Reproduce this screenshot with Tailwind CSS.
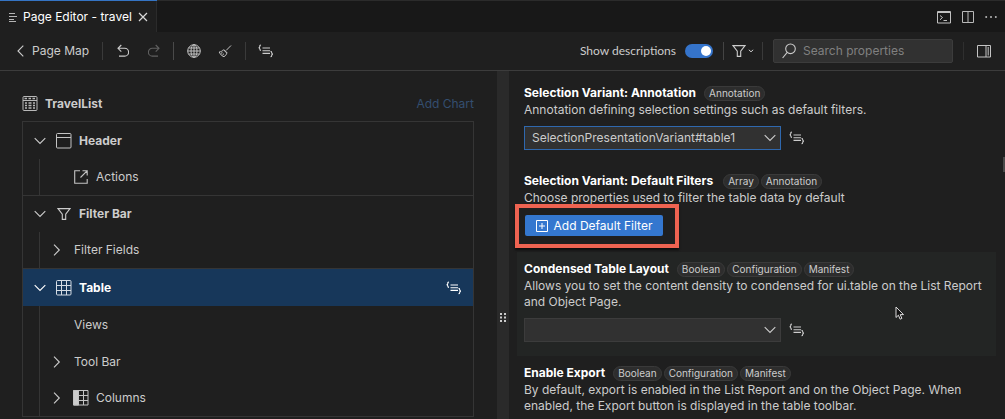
<!DOCTYPE html>
<html lang="en">
<head>
<meta charset="utf-8">
<title>Page Editor - travel</title>
<script src="https://cdn.jsdelivr.net/npm/@tailwindcss/browser@4"></script>
</head>
<body class="flex h-screen flex-col overflow-hidden bg-[#1f1f1f] font-['Inter','Liberation_Sans',sans-serif] text-xs text-[#cccccc]">
<svg class="hidden">
  <symbol id="code" viewBox="0 0 16 14" fill="none" stroke="currentColor" stroke-width="1.1">
    <path d="M3 1C1.800 1 1.800 1.600 1.800 2.400S1.600 3.600.6 3.700C1.600 3.800 1.800 4.300 1.800 5.100S1.800 6.400 3 6.400M4.500 4h7.500M4.500 6.700h7.500M4.500 9.400h7.500M12.500 7.400c1.200 0 1.200.6 1.200 1.400s.2 1.200 1.200 1.300c-1 .1-1.200.6-1.200 1.400s0 1.300-1.200 1.300"/>
  </symbol>
  <symbol id="down" viewBox="0 0 12 8" fill="none" stroke="currentColor" stroke-width="1.1"><path d="M.7 1.200 6 6.500l5.300-5.300"/></symbol>
  <symbol id="right" viewBox="0 0 8 12" fill="none" stroke="currentColor" stroke-width="1.1"><path d="M1 .7 6.300 6 1 11.300"/></symbol>
  <symbol id="funnel" viewBox="0 0 14 14" fill="none" stroke="currentColor" stroke-width="1.1"><path d="M1 1.600h12L8.700 7.200v5.200H5.300V7.200z"/></symbol>
</svg>

<header class="flex h-8 shrink-0 items-stretch border-t border-[#2b2b2b] bg-[#181818]">
  <div class="flex w-[157px] items-center border-r border-[#2b2b2b] bg-[#1f1f1f] pl-[9px] shadow-[0_-1px_0_#3574c4]">
    <svg class="mr-1.5 h-3 w-2 shrink-0" viewBox="0 0 8 12" stroke="#b5b5b5" fill="none"><path d="M0 2.500h6M0 5.500h8M0 8.500h5M0 10.500h7"/></svg>
    <span class="whitespace-nowrap text-white">Page Editor - travel</span>
    <button aria-label="Close tab" class="ml-1.5 shrink-0"><svg class="h-2.5 w-2.5" viewBox="0 0 10 10" stroke="#d8d8d8" stroke-width="1.2"><path d="m1 1 8 8M9 1 1 9"/></svg></button>
  </div>
  <div class="ml-auto flex items-center gap-[11px] pr-2">
    <button aria-label="Open terminal"><svg class="h-3.5 w-3.5" viewBox="0 0 14 14" fill="none" stroke="#c0c0c0"><path d="M.5 1.500h13v11.500H.5zM.5 2.500h13M3 5.500l2.500 2L3 9.800M6.500 10.500H10"/></svg></button>
    <button aria-label="Split editor"><svg class="h-3.5 w-3" viewBox="0 0 12 14" fill="none" stroke="#b8b8b8"><path d="M.5 1.500h11v11H.5zM6 1.500v11"/></svg></button>
    <button aria-label="More actions"><svg class="h-3.5 w-3" viewBox="0 0 12 14" fill="#b8b8b8"><circle cx="1.200" cy="7" r="1"/><circle cx="6" cy="7" r="1"/><circle cx="10.800" cy="7" r="1"/></svg></button>
  </div>
</header>

<div class="flex h-[39px] shrink-0 items-center border-b border-[#3c3c3c] pr-3.5 pl-[17px]">
  <button class="flex items-center gap-2">
    <svg class="h-3 w-[7px]" viewBox="0 0 7 12" fill="none" stroke="currentColor" stroke-width="1.1"><path d="M6.300.7 1 6l5.300 5.300"/></svg>
    <span>Page Map</span>
  </button>
  <span class="ml-[13px] h-[18px] w-px bg-[#3a3a3a]"></span>
  <button aria-label="Undo" class="ml-3.5"><svg class="h-3.5 w-3" viewBox="0 0 12 14" fill="none" stroke="#cccccc" stroke-width="1.100"><path d="M4.300 1 1 4.300l3.300 3.300M1 4.300h6.700a3.900 3.900 0 0 1 0 7.800H2"/></svg></button>
  <button aria-label="Redo" class="ml-[19px]" disabled><svg class="h-3.5 w-3" viewBox="0 0 12 14" fill="none" stroke="#606060" stroke-width="1.100"><path d="M7.700 1 11 4.300 7.700 7.600M11 4.300H4.300a3.900 3.900 0 0 0 0 7.800H10"/></svg></button>
  <span class="ml-[13px] h-[18px] w-px bg-[#4a4a4a]"></span>
  <button aria-label="Language" class="ml-[13px]"><svg class="h-3.5 w-3.5" viewBox="0 0 14 14" fill="none" stroke="#c4c4c4"><circle cx="7" cy="7" r="6.300"/><ellipse cx="7" cy="7" rx="3" ry="6.300"/><path d="M7 .7v12.600M.7 7h12.600M1.600 4h10.800M1.600 10h10.800"/></svg></button>
  <button aria-label="Clean up" class="ml-[17px]"><svg class="h-3.5 w-3.5" viewBox="0 0 14 14" fill="none" stroke="#c4c4c4"><path d="M13 1.500 8.200 6.400M5.800 5.500l3.400 3.400M5.500 5.800C4.500 7.200 3 7.600 1.200 8c1 2.300 2.500 3.900 4.800 4.700 1.400-1 2.400-2 2.800-3.600zM2.800 9.300l1.700-.6M4.300 11.200l1.700-1.500"/></svg></button>
  <span class="ml-[13px] h-[18px] w-px bg-[#3a3a3a]"></span>
  <button aria-label="Show source" class="ml-3"><svg class="h-3.5 w-4"><use href="#code"/></svg></button>

  <label for="desc" class="ml-auto font-['Lato','Noto_Sans',sans-serif]">Show descriptions</label>
  <input id="desc" type="checkbox" role="switch" checked class="ml-[9px] h-3.5 w-7 appearance-none rounded-full bg-[#3574cb] before:mt-[2px] before:ml-4 before:block before:h-2.5 before:w-2.5 before:rounded-full before:bg-white">
  <span class="ml-2.5 h-[18px] w-px bg-[#444444]"></span>
  <button aria-label="Filter properties" class="ml-2 flex items-center gap-0.5">
    <svg class="h-3.5 w-3.5"><use href="#funnel"/></svg>
    <svg class="h-1 w-1.5" viewBox="0 0 6 4" fill="none" stroke="currentColor"><path d="m.8.8 2.200 2 2.200-2"/></svg>
  </button>
  <span class="ml-2 h-[18px] w-px bg-[#3a3a3a]"></span>
  <div class="ml-2.5 flex h-6 w-[180px] items-center gap-[7px] rounded-xs border border-[#3c3c3c] bg-[#313131] pl-2">
    <svg class="h-4 w-3.5 shrink-0" viewBox="0 0 14 16" fill="none" stroke="currentColor" stroke-width="1.100"><circle cx="8.500" cy="5.800" r="4.800"/><path d="M5.200 9.400.6 15"/></svg>
    <input type="text" aria-label="Search properties" placeholder="Search properties" class="w-full min-w-0 bg-transparent outline-none placeholder:text-[#808080]">
  </div>
  <span class="ml-2.5 h-[18px] w-px bg-[#2f2f2f]"></span>
  <button aria-label="Toggle side panel" class="ml-[13px]"><svg class="h-3.5 w-3.5" viewBox="0 0 14 14" fill="none" stroke="#c4c4c4"><path d="M.5 1.500h13v11.500H.5zM9 1.500V13M11.200 3v8.500"/></svg></button>
</div>

<main class="flex min-h-0 flex-1">
  <section class="w-[497px] shrink-0 pt-[22px] pr-[23px] pl-[22px]">
    <div class="flex h-[22px] items-center">
      <svg class="mr-[7px] h-4 w-4" viewBox="0 0 16 16" fill="none" stroke="#b8b8b8"><rect x="1" y=".5" width="14" height="14" rx="1"/><path d="M1 4.500h14" /><path d="M2.500 2.500h2.500M6.500 2.500H9M10.500 2.500H13M3 7h2M6.500 7h3M11 7h2M3 9.500h2M6.500 9.500h3M11 9.500h2M3 12h2M6.500 12h3M11 12h2" stroke-width="1.400"/></svg>
      <h1 class="font-bold">TravelList</h1>
      <button class="ml-auto text-[#344e6f]" disabled>Add Chart</button>
    </div>
    <div class="mt-1.5 border border-[#353535]">
      <div>
        <div class="flex h-[37px] items-center pl-[11px]">
          <button aria-label="Collapse Header"><svg class="h-2 w-3"><use href="#down"/></svg></button>
          <svg class="mr-[7px] ml-[10px] h-4 w-4" viewBox="0 0 16 16" fill="none" stroke="#c4c4c4"><rect x=".5" y=".5" width="14.500" height="14.500" rx="1"/><path d="M.5 4.500H15"/></svg>
          <span class="font-bold">Header</span>
        </div>
        <div class="ml-4 border-l border-[#353535]">
          <div class="flex h-9 items-center pl-[34px]">
            <svg class="mr-2 h-3.5 w-3.5" viewBox="0 0 14 14" fill="none" stroke="#c4c4c4" stroke-width="1.100"><path d="M6 .8H.7v12.400h12.500V9M6.500 7.500l6.300-6.300M8.500.8h4.700v4.700"/></svg>
            <span>Actions</span>
          </div>
        </div>
      </div>
      <div class="border-t border-[#353535]">
        <div class="flex h-9 items-center pl-[11px]">
          <button aria-label="Collapse Filter Bar"><svg class="h-2 w-3"><use href="#down"/></svg></button>
          <svg class="mr-2 ml-[11px] h-3.5 w-3.5"><use href="#funnel"/></svg>
          <span class="font-bold">Filter Bar</span>
        </div>
        <div class="ml-4 border-l border-[#353535]">
          <div class="flex h-9 items-center pl-[13px]">
            <button aria-label="Expand Filter Fields" class="mr-[13px]"><svg class="h-3 w-2"><use href="#right"/></svg></button>
            <span>Filter Fields</span>
          </div>
        </div>
      </div>
      <div class="border-t border-[#353535]">
        <div class="flex h-[37px] items-center bg-[#17375a] pr-[11px] pl-[11px] text-white">
          <button aria-label="Collapse Table"><svg class="h-2 w-3"><use href="#down"/></svg></button>
          <svg class="mr-[7px] ml-[10px] h-4 w-4" viewBox="0 0 16 16" fill="none" stroke="#d4dce4"><rect x=".5" y=".5" width="14.500" height="14.500" rx="1"/><path d="M.5 5.500H15M.5 10.500H15M5.500.5V15M10.500.5V15"/></svg>
          <span class="font-bold">Table</span>
          <button aria-label="Show Table source" class="ml-auto"><svg class="h-3.5 w-4"><use href="#code"/></svg></button>
        </div>
        <div class="ml-4 border-l border-[#353535]">
          <div class="flex h-[37px] items-center pl-[34px]">Views</div>
          <div class="flex h-[37px] items-center pl-[13px]">
            <button aria-label="Expand Tool Bar" class="mr-[13px]"><svg class="h-3 w-2"><use href="#right"/></svg></button>
            <span>Tool Bar</span>
          </div>
          <div class="flex h-9 items-center pl-[13px]">
            <button aria-label="Expand Columns" class="mr-[12px]"><svg class="h-3 w-2"><use href="#right"/></svg></button>
            <svg class="mr-[7px] h-4 w-4" viewBox="0 0 16 16" fill="none" stroke="#c4c4c4"><path fill="#cccccc" d="M.5.5h5V15h-5z"/><path d="M.5.500H15V15H.5M5 5.500h10M5 10.500h10M10.500.500V15"/></svg>
            <span>Columns</span>
          </div>
        </div>
      </div>
    </div>
  </section>

  <div class="flex w-3 shrink-0 items-center justify-center bg-[#2a2a2a] pt-36" role="separator" aria-orientation="vertical">
    <svg class="h-[9px] w-1.5" viewBox="0 0 6 9" fill="#cccccc"><path d="M0 0h2v2H0zM4 0h2v2H4zM0 3.500h2v2H0zM4 3.500h2v2H4zM0 7h2v2H0zM4 7h2v2H4z"/></svg>
  </div>

  <section class="relative min-w-0 flex-1 overflow-hidden pt-[5px] pr-[9px] pl-2 leading-4">
    <div class="px-[7px] pt-2 pb-3.5">
      <div class="flex h-[18px] items-center gap-0.5">
        <h2 class="mr-1.5 font-bold text-white">Selection Variant: Annotation</h2>
        <span class="rounded-full border border-[#3a3a3a] bg-[#2d2d2d] px-1 text-[10px] leading-[13px]">Annotation</span>
      </div>
      <p>Annotation defining selection settings such as default filters.</p>
      <div class="mt-2 flex items-center">
        <div class="relative w-[257px]">
          <select aria-label="Selection Variant: Annotation" class="block h-6 w-full appearance-none border border-[#2f68ae] bg-[#313131] pl-[7px] outline-none"><option>SelectionPresentationVariant#table1</option></select>
          <svg class="pointer-events-none absolute top-2 right-[5px] h-2 w-3"><use href="#down"/></svg>
        </div>
        <button aria-label="Show annotation source" class="ml-2"><svg class="h-3.5 w-4"><use href="#code"/></svg></button>
      </div>
    </div>

    <div class="px-[7px] pt-2 pb-4">
      <div class="flex h-[18px] items-center gap-0.5">
        <h2 class="mr-2 font-bold text-white">Selection Variant: Default Filters</h2>
        <span class="rounded-full border border-[#3a3a3a] bg-[#2d2d2d] px-1 text-[10px] leading-[13px]">Array</span>
        <span class="rounded-full border border-[#3a3a3a] bg-[#2d2d2d] px-1 text-[10px] leading-[13px]">Annotation</span>
      </div>
      <p>Choose properties used to filter the table data by default</p>
      <div class="relative mt-[9px] ml-px w-fit">
        <button class="flex h-[21px] w-[138px] items-center justify-center gap-1.5 rounded-xs bg-[#3477cf] text-white">
          <svg class="h-3 w-3 shrink-0" viewBox="0 0 12 12" fill="none" stroke="currentColor"><path d="M.5.500h11v11H.5zM6 3v6M3 6h6"/></svg>
          <span class="whitespace-nowrap">Add Default Filter</span>
        </button>
        <div class="pointer-events-none absolute -top-[11px] -right-4 -bottom-3 -left-2.5 border-4 border-[#ee6351] shadow-[0_2px_2px_#00000099]"></div>
      </div>
    </div>

    <div class="bg-[#232524] px-[7px] pt-2 pb-3.5">
      <div class="flex h-[18px] items-center gap-0.5">
        <h2 class="mr-1.5 font-bold text-white">Condensed Table Layout</h2>
        <span class="rounded-full border border-[#3a3a3a] bg-[#2d2d2d] px-1 text-[10px] leading-[13px]">Boolean</span>
        <span class="rounded-full border border-[#3a3a3a] bg-[#2d2d2d] px-1 text-[10px] leading-[13px]">Configuration</span>
        <span class="rounded-full border border-[#3a3a3a] bg-[#2d2d2d] px-1 text-[10px] leading-[13px]">Manifest</span>
      </div>
      <p>Allows you to set the content density to condensed for ui.table on the List Report and Object Page.</p>
      <div class="mt-2 flex items-center">
        <div class="relative w-[257px]">
          <select aria-label="Condensed Table Layout" class="block h-6 w-full appearance-none border border-[#3c3c3c] bg-[#313131] pl-[7px] outline-none"><option></option></select>
          <svg class="pointer-events-none absolute top-2 right-[5px] h-2 w-3"><use href="#down"/></svg>
        </div>
        <button aria-label="Show layout source" class="ml-2"><svg class="h-3.5 w-4"><use href="#code"/></svg></button>
      </div>
    </div>

    <div class="px-[7px] pt-2 pb-3.5">
      <div class="flex h-[18px] items-center gap-0.5">
        <h2 class="mr-1.5 font-bold text-white">Enable Export</h2>
        <span class="rounded-full border border-[#3a3a3a] bg-[#2d2d2d] px-1 text-[10px] leading-[13px]">Boolean</span>
        <span class="rounded-full border border-[#3a3a3a] bg-[#2d2d2d] px-1 text-[10px] leading-[13px]">Configuration</span>
        <span class="rounded-full border border-[#3a3a3a] bg-[#2d2d2d] px-1 text-[10px] leading-[13px]">Manifest</span>
      </div>
      <p>By default, export is enabled in the List Report and on the Object Page. When enabled, the Export button is displayed in the table toolbar.</p>
    </div>

    <div class="absolute top-[86px] right-0 h-[15px] w-0.5 bg-[#4a4a4a]"></div>
    <svg class="pointer-events-none absolute top-[235px] right-[101px] h-3.5 w-[9px]" viewBox="0 0 9 14" fill="#111111" stroke="#dddddd"><path d="M1 1v10.500l2.400-2.300 1.700 4 1.800-.8-1.700-3.800H8.500z"/></svg>
  </section>
</main>
</body>
</html>
